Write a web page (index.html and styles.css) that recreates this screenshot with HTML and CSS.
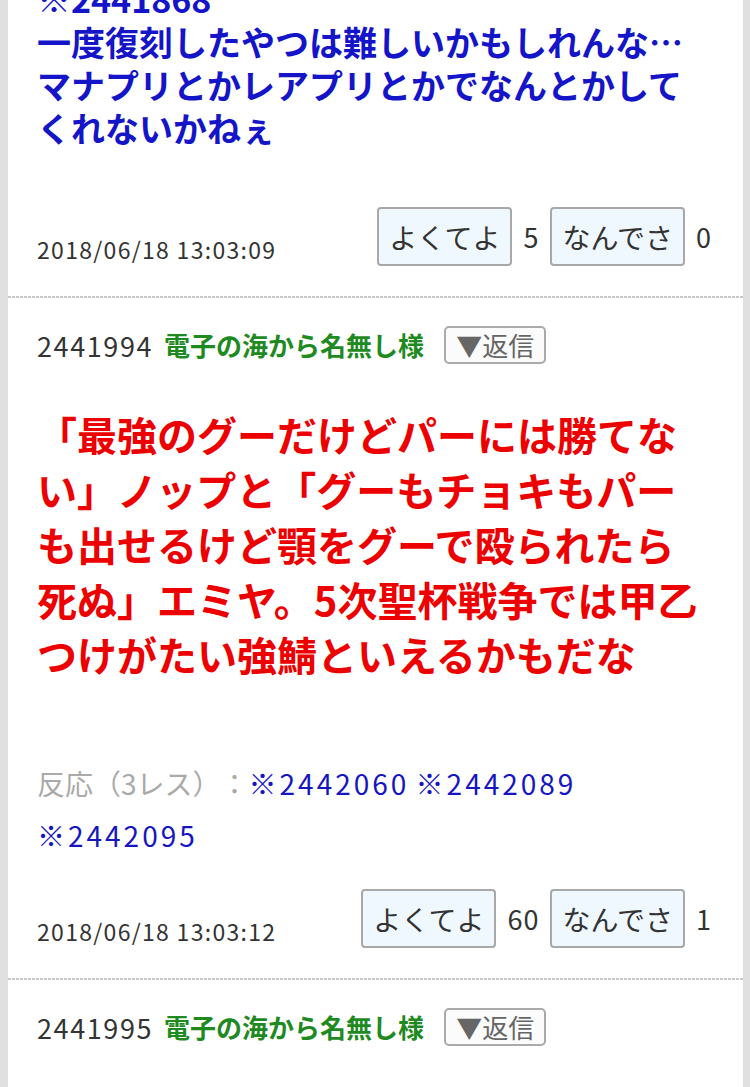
FILE: index.html
```html
<!DOCTYPE html>
<html lang="ja">
<head>
<meta charset="utf-8">
<title>スレッド</title>
<link rel="stylesheet" href="styles.css">
</head>
<body>
<main class="thread">
  <article class="post post-partial">
    <div class="body body-blue">※2441868<br>一度復刻したやつは難しいかもしれんな…<br>マナプリとかレアプリとかでなんとかして<br>くれないかねぇ</div>
    <footer class="foot">
      <span class="date">2018/06/18 13:03:09</span>
      <div class="votes">
        <button class="vote">よくてよ</button><span class="count">5</span>
        <button class="vote">なんでさ</button><span class="count">0</span>
      </div>
    </footer>
  </article>

  <article class="post">
    <header class="head">
      <span class="num">2441994</span>
      <span class="name">電子の海から名無し様</span>
      <button class="reply">▼返信</button>
    </header>
    <div class="body body-red">「最強のグーだけどパーには勝てな<br>い」ノップと「グーもチョキもパー<br>も出せるけど顎をグーで殴られたら<br>死ぬ」エミヤ。5次聖杯戦争では甲乙<br>つけがたい強鯖といえるかもだな</div>
    <div class="reactions"><span class="react-label">反応（3レス）：</span><a class="ref">※2442060</a> <a class="ref">※2442089</a> <a class="ref">※2442095</a></div>
    <footer class="foot">
      <span class="date">2018/06/18 13:03:12</span>
      <div class="votes">
        <button class="vote">よくてよ</button><span class="count">60</span>
        <button class="vote">なんでさ</button><span class="count">1</span>
      </div>
    </footer>
  </article>

  <article class="post post-last">
    <header class="head">
      <span class="num">2441995</span>
      <span class="name">電子の海から名無し様</span>
      <button class="reply">▼返信</button>
    </header>
  </article>
</main>
</body>
</html>
```

FILE: styles.css
```css
html, body {
  margin: 0;
  padding: 0;
  background: #e0e0e0;
}
body {
  font-family: "Noto Sans CJK JP", "Noto Sans", sans-serif;
  color: #333;
  overflow: hidden;
  text-spacing-trim: space-all;
}
.thread {
  margin: 0 7px 0 8px;
  background: #fff;
  min-height: 1200px;
}
.post {
  display: flex;
  flex-direction: column;
  padding: 28px 31px 32px 29px;
  background: linear-gradient(to right, #c8c8c8 70%, transparent 0) left bottom / 4px 2px repeat-x;
}
.post-last {
  background: none;
}
.post-partial {
  padding-top: 0;
}
.post-partial .body {
  margin-top: -23px;
}
.head {
  display: flex;
  align-items: center;
  height: 38px;
}
.num {
  font-size: 27px;
  letter-spacing: 1.6px;
  color: #333;
  line-height: 1;
}
.name {
  margin-left: 11px;
  font-size: 26px;
  font-weight: bold;
  color: #1f8a1f;
  line-height: 1;
}
.reply {
  margin-left: 20px;
  height: 38px;
  padding: 0 10px;
  font-family: inherit;
  font-size: 26px;
  line-height: 1;
  color: #666;
  background: #fbfbfb;
  border: 2px solid #aaa;
  border-radius: 5px;
}
.body {
  font-weight: bold;
  margin-bottom: 28px;
}
.head + .body {
  margin-top: 43px;
}
.body-blue {
  font-size: 34px;
  line-height: 43px;
  color: #1414c8;
}
.post-partial .body-blue {
  margin-bottom: 30px;
}
.body-red {
  font-size: 40px;
  line-height: 55px;
  color: #ec0000;
}
.reactions {
  margin-top: 47px;
  font-size: 28px;
  line-height: 52px;
}
.react-label {
  color: #aaa;
}
.ref {
  color: #1616c0;
  letter-spacing: 3px;
}
.foot {
  display: flex;
  justify-content: space-between;
  align-items: flex-end;
  margin-top: 28px;
}
.date {
  font-size: 23px;
  line-height: 23px;
  letter-spacing: 1.3px;
  color: #333;
  margin-bottom: 5px;
}
.votes {
  display: flex;
  align-items: center;
  gap: 11px;
}
.vote {
  height: 59px;
  padding: 0 10px;
  font-family: inherit;
  font-size: 28px;
  line-height: 1;
  color: #333;
  background: #f0f8ff;
  border: 2px solid #a8a8a8;
  border-radius: 4px;
}
.count {
  font-size: 27px;
  letter-spacing: 1px;
  color: #333;
}
```
